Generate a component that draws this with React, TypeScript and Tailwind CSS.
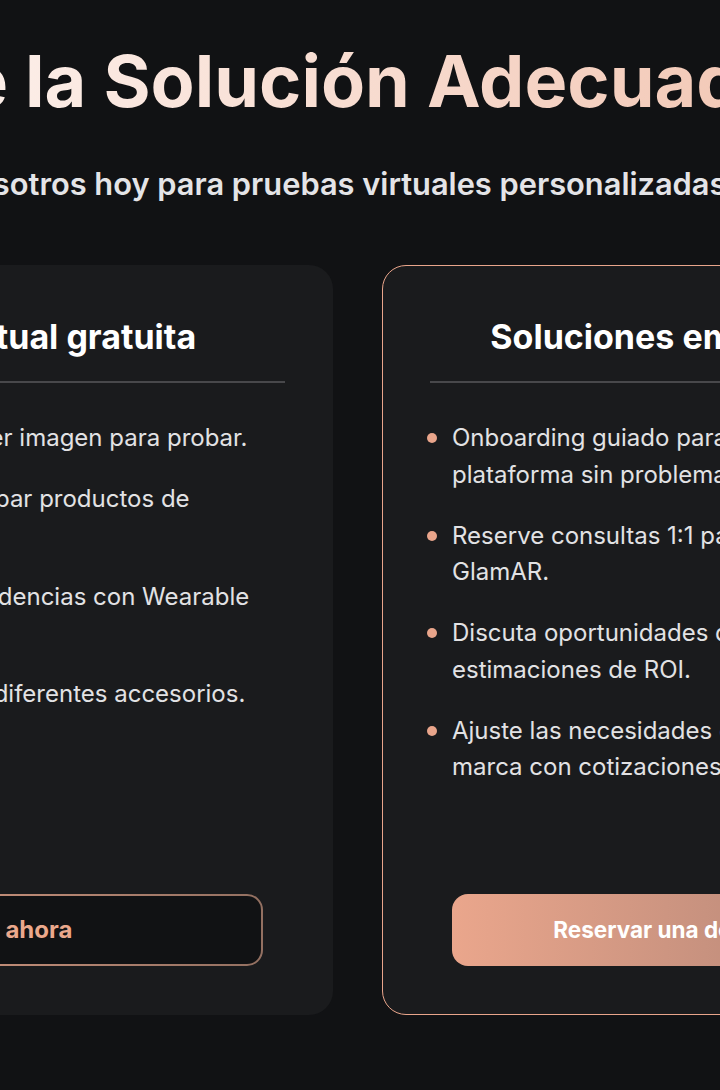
import React from "react";

const basicFeatures = [
  "Suba o tome cualquier imagen para probar.",
  "Use su cara para probar productos de maquillaje.",
  "Descubra nuevas tendencias con Wearable AR.",
  "Pruebe y mezcle los diferentes accesorios.",
];

const enterpriseFeatures = [
  "Onboarding guiado para integrar con su plataforma sin problemas.",
  "Reserve consultas 1:1 para saber más de GlamAR.",
  "Discuta oportunidades de integración y estimaciones de ROI.",
  "Ajuste las necesidades de integración de su marca con cotizaciones personalizadas.",
];

function FeatureList({ items, className }: { items: string[]; className: string }) {
  return (
    <ul className={`mt-[37px] flex flex-col gap-[24.5px] pr-[48px] ${className}`}>
      {items.map((item) => (
        <li key={item} className="flex items-start gap-[15px]">
          <span className="mt-[13px] h-[10px] w-[10px] shrink-0 rounded-full bg-[#e9a58b]" />
          <span className="text-[24px] leading-[36.5px] text-[#e2e2e4]">{item}</span>
        </li>
      ))}
    </ul>
  );
}

export default function App() {
  return (
    <div
      className="flex min-h-screen flex-col items-center overflow-hidden bg-[#111214] pr-[5px] pt-[41px]"
      style={{ fontFamily: "Inter, 'Noto Sans', sans-serif" }}
    >
      <h1 className="shrink-0 whitespace-nowrap bg-gradient-to-r from-white to-[#eeb9a2] bg-clip-text text-[72px] font-bold leading-[80px] text-transparent">
        Encuentre la Solución Adecuada para Ti.
      </h1>
      <p className="mt-[45px] shrink-0 whitespace-nowrap text-[30.8px] font-semibold leading-[36px] text-[#e4e4e7]">
        Hable con nosotros hoy para pruebas virtuales personalizadas y una demo.
      </p>

      <div className="mt-[63px] flex shrink-0 gap-[49px]">
        {/* free plan */}
        <div className="flex h-[750px] w-[645px] flex-col rounded-[24px] bg-[#1a1b1d] px-[48px] pb-[49px] pt-[52px]">
          <h2 className="text-center text-[34px] font-bold leading-[40px] text-white">
            Prueba virtual gratuita
          </h2>
          <div className="mt-[24px] h-[2px] bg-[#48484b]" />
          <div className="-mx-[48px]">
            <FeatureList items={basicFeatures} className="pl-[45px]" />
          </div>
          <div className="mt-auto px-[22px]">
            <div className="rounded-[16px] bg-gradient-to-r from-[#e9a58b] to-[#937061] p-[2px]">
              <button className="flex h-[68px] w-full items-center justify-center rounded-[14px] bg-[#111214] text-[24px] font-bold text-[#eba88c]">
                Pida ahora
              </button>
            </div>
          </div>
        </div>

        {/* enterprise */}
        <div className="flex h-[750px] w-[645px] flex-col rounded-[24px] border border-[#e9a58b] bg-[#1a1b1d] px-[47px] pb-[48px] pt-[51px]">
          <h2 className="text-center text-[34px] font-bold leading-[40px] text-white">
            Soluciones empresariales
          </h2>
          <div className="mt-[24px] h-[2px] bg-[#48484b]" />
          <div className="-mx-[47px]">
            <FeatureList items={enterpriseFeatures} className="pl-[44px]" />
          </div>
          <div className="mt-auto px-[22px]">
            <button className="flex h-[72px] w-full items-center justify-center rounded-[16px] bg-gradient-to-r from-[#eaa68c] via-[#c8927f] to-[#aa7e6f] text-[22.5px] font-bold text-white">
              Reservar una demostración
            </button>
          </div>
        </div>
      </div>
    </div>
  );
}
